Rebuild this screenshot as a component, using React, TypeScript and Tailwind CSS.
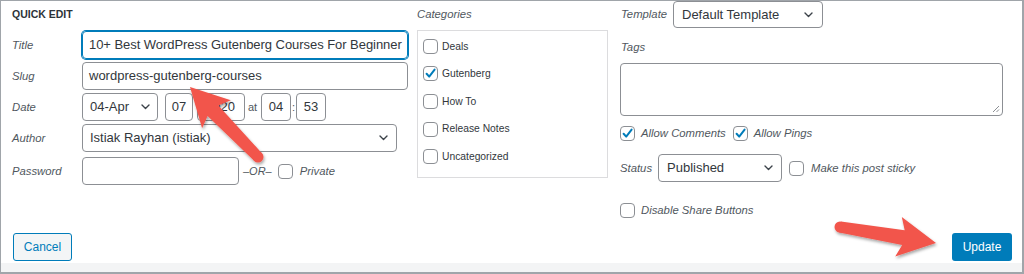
import React from "react";

const FONT = "font-['Liberation_Sans',Arial,sans-serif]";

function Chevron() {
  return (
    <svg width="9" height="6" viewBox="0 0 9 6" className="shrink-0">
      <path d="M1 1l3.5 3.5L8 1" fill="none" stroke="#3c434a" strokeWidth="1.4" strokeLinecap="round" strokeLinejoin="round" />
    </svg>
  );
}

function Checkbox({ checked }: { checked?: boolean }) {
  return (
    <span className="w-[15px] h-[15px] shrink-0 rounded-[4px] border border-[#8c8f94] bg-white flex items-center justify-center">
      {checked && (
        <svg width="13" height="13" viewBox="0 0 13 13">
          <path d="M2.6 6.8l2.6 2.8L10.6 2.6" fill="none" stroke="#007cba" strokeWidth="2" strokeLinecap="round" strokeLinejoin="round" />
        </svg>
      )}
    </span>
  );
}

function Label({ children, w }: { children: React.ReactNode; w: string }) {
  return <span className={`${w} shrink-0 italic text-[11.3px] text-[#50575e]`}>{children}</span>;
}

function arrow(tx: number, ty: number, hx: number, hy: number, headLen: number, headHW: number, wTail: number, wHead: number) {
  const dx = hx - tx;
  const dy = hy - ty;
  const L = Math.hypot(dx, dy);
  const ux = dx / L;
  const uy = dy / L;
  const nx = -uy;
  const ny = ux;
  const bx = hx - ux * headLen;
  const by = hy - uy * headLen;
  const p = (x: number, y: number) => `${x.toFixed(1)},${y.toFixed(1)}`;
  const pts = [
    p(tx + (nx * wTail) / 2, ty + (ny * wTail) / 2),
    p(bx + (nx * wHead) / 2 + ux * 3, by + (ny * wHead) / 2 + uy * 3),
    p(bx + nx * headHW - ux * 2, by + ny * headHW - uy * 2),
    p(hx, hy),
    p(bx - nx * headHW - ux * 2, by - ny * headHW - uy * 2),
    p(bx - (nx * wHead) / 2 + ux * 3, by - (ny * wHead) / 2 + uy * 3),
    p(tx - (nx * wTail) / 2, ty - (ny * wTail) / 2),
  ];
  return pts.join(" ");
}

const categories = ["Deals", "Gutenberg", "How To", "Release Notes", "Uncategorized"];

export default function App() {
  return (
    <div className={`relative w-[1024px] h-[274px] border-t border-l border-r-2 border-b-2 border-[#a0a5aa] bg-white flex flex-col ${FONT}`}>
      <div className="flex-1 flex flex-col">
        <div className="flex">
          {/* Left column */}
          <div className="w-[396px] ml-[11px] flex flex-col">
            <div className="h-[30px] pt-[6px] text-[10.5px] leading-[14px] font-bold text-[#2c3338]">QUICK EDIT</div>
            <div className="flex items-center h-[28px]">
              <Label w="w-[70px]">Title</Label>
              <div className="w-[326px] h-[28px] rounded-[4px] border border-[#007cba] shadow-[0_0_0_1px_#007cba] pl-[6px] flex items-center text-[13px] text-[#32373c] whitespace-nowrap tracking-[-0.05px]">
                10+ Best WordPress Gutenberg Courses For Beginner
              </div>
            </div>
            <div className="flex items-center h-[28px] mt-[3px]">
              <Label w="w-[70px]">Slug</Label>
              <div className="w-[326px] h-[28px] rounded-[4px] border border-[#8c8f94] px-[6px] flex items-center text-[13px] text-[#32373c] whitespace-nowrap">
                wordpress-gutenberg-courses
              </div>
            </div>
            <div className="flex items-center h-[28px] mt-[3px] text-[13px] text-[#32373c]">
              <Label w="w-[70px]">Date</Label>
              <div className="w-[76px] h-[28px] rounded-[4px] border border-[#8c8f94] pl-[7px] pr-[7px] flex items-center justify-between">
                <span>04-Apr</span>
                <Chevron />
              </div>
              <div className="ml-[7px] w-[28px] h-[28px] rounded-[4px] border border-[#8c8f94] flex items-center justify-center">07</div>
              <div className="ml-[4px] w-[48px] h-[28px] rounded-[4px] border border-[#8c8f94] pl-[8px] flex items-center">2020</div>
              <span className="ml-[3px] w-[13px] text-[11px] text-[#50575e]">at</span>
              <div className="w-[30px] h-[28px] rounded-[4px] border border-[#8c8f94] flex items-center justify-center">04</div>
              <span className="w-[5px] text-center text-[11px] text-[#50575e]">:</span>
              <div className="w-[30px] h-[28px] rounded-[4px] border border-[#8c8f94] flex items-center justify-center">53</div>
            </div>
            <div className="flex items-center h-[28px] mt-[3px]">
              <Label w="w-[70px]">Author</Label>
              <div className="w-[315px] h-[28px] rounded-[4px] border border-[#8c8f94] pl-[7px] pr-[8px] flex items-center justify-between text-[13px] text-[#32373c]">
                <span>Istiak Rayhan (istiak)</span>
                <Chevron />
              </div>
            </div>
            <div className="flex items-center h-[28px] mt-[5px]">
              <Label w="w-[70px]">Password</Label>
              <div className="w-[157px] h-[28px] rounded-[4px] border border-[#8c8f94]" />
              <span className="ml-[4px] italic text-[11px] text-[#50575e]">–OR–</span>
              <span className="ml-[6px]"><Checkbox /></span>
              <span className="ml-[7px] italic text-[11.3px] text-[#50575e]">Private</span>
            </div>
          </div>

          {/* Middle column */}
          <div className="ml-[9px] w-[191px] flex flex-col">
            <div className="h-[26px] leading-[26px] italic text-[11.3px] text-[#50575e]">Categories</div>
            <div className="mt-[3px] h-[148px] border border-[#dcdcde] bg-white overflow-hidden pt-[1.5px] pl-[5px]">
              {categories.map((c) => (
                <div key={c} className="h-[27.6px] flex items-center">
                  <Checkbox checked={c === "Gutenberg"} />
                  <span className="ml-[4px] text-[10.3px] text-[#32373c]">{c}</span>
                </div>
              ))}
              <div className="h-[27.6px] flex items-center">
                <Checkbox />
              </div>
            </div>
          </div>

          {/* Right column */}
          <div className="ml-[12px] w-[383px] flex flex-col">
            <div className="h-[27px] flex items-center">
              <Label w="w-[53px] pl-[1px]">Template</Label>
              <div className="w-[150px] h-[27px] rounded-[4px] border border-[#8c8f94] pl-[8px] pr-[9px] flex items-center justify-between text-[13px] text-[#32373c]">
                <span>Default Template</span>
                <Chevron />
              </div>
            </div>
            <div className="h-[35px] pt-[12px] leading-[14px] pl-[1px] italic text-[11.3px] text-[#50575e]">Tags</div>
            <div className="relative w-[383px] h-[53px] rounded-[4px] border border-[#8c8f94]">
              <svg width="8" height="8" viewBox="0 0 8 8" className="absolute right-[2px] bottom-[2px]">
                <path d="M7 1L1 7M7 4.5L4.5 7" stroke="#8c8f94" strokeWidth="1" />
              </svg>
            </div>
            <div className="mt-[4px] h-[26px] flex items-center">
              <Checkbox checked />
              <span className="ml-[6px] italic text-[11.3px] text-[#50575e]">Allow Comments</span>
              <span className="ml-[7px]"><Checkbox checked /></span>
              <span className="ml-[6px] italic text-[11.3px] text-[#50575e]">Allow Pings</span>
            </div>
            <div className="mt-[8px] h-[28px] flex items-center">
              <Label w="w-[38px]">Status</Label>
              <div className="w-[124px] h-[28px] rounded-[4px] border border-[#8c8f94] pl-[8px] pr-[8px] flex items-center justify-between text-[13px] text-[#32373c]">
                <span>Published</span>
                <Chevron />
              </div>
              <span className="ml-[7px]"><Checkbox /></span>
              <span className="ml-[7px] italic text-[11.3px] text-[#50575e]">Make this post sticky</span>
            </div>
            <div className="mt-[14px] h-[28px] flex items-center">
              <Checkbox />
              <span className="ml-[6px] italic text-[11.3px] text-[#50575e]">Disable Share Buttons</span>
            </div>
          </div>
        </div>

        <div className="mt-auto pb-[2px] pl-[12px] pr-[10px] flex justify-between">
          <button className="w-[59px] h-[28px] rounded-[3px] border border-[#007cba] bg-[#f3f5f6] text-[12px] text-[#007cba]">Cancel</button>
          <button className="w-[60px] h-[28px] rounded-[3px] bg-[#007cba] text-[12px] text-white">Update</button>
        </div>
      </div>
      <div className="h-[9px] bg-[#f3f4f5]" />

      <svg width="1024" height="274" className="absolute left-[-1px] top-[-1px] pointer-events-none">
        <defs>
          <filter id="sh" x="-20%" y="-20%" width="140%" height="140%">
            <feDropShadow dx="1" dy="2" stdDeviation="1.5" floodColor="#000" floodOpacity="0.35" />
          </filter>
        </defs>
        <g filter="url(#sh)" fill="#f2554b">
          <polygon points={arrow(258, 157, 190, 87, 36, 20, 11, 15)} />
          <circle cx="258" cy="157" r="5.5" />
          <polygon points={arrow(840, 227, 936, 243, 36, 20, 11, 15)} />
          <circle cx="840" cy="227" r="5.5" />
        </g>
      </svg>
    </div>
  );
}
